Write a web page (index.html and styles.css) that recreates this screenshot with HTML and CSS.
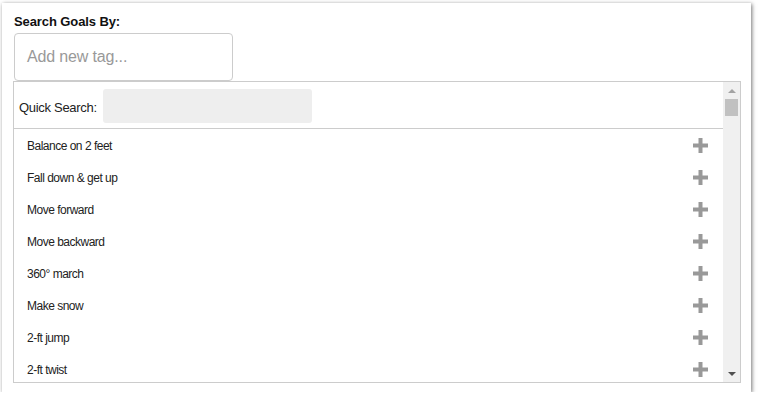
FILE: index.html
```html
<!DOCTYPE html>
<html>
<head>
<meta charset="utf-8">
<link rel="stylesheet" href="styles.css">
</head>
<body>
<div class="dialog">
  <div class="heading">Search Goals By:</div>
  <div class="tag-input">Add new tag...</div>
  <div class="list-box">
    <div class="list-main">
      <div class="quick">
        <span class="quick-label">Quick Search:</span>
        <div class="quick-input"></div>
      </div>
      <div class="rows">
        <div class="row"><span>Balance on 2 feet</span><svg class="plus" viewBox="0 0 15 15"><path d="M7.5 0v15M0 7.5h15"/></svg></div>
        <div class="row"><span>Fall down &amp; get up</span><svg class="plus" viewBox="0 0 15 15"><path d="M7.5 0v15M0 7.5h15"/></svg></div>
        <div class="row"><span>Move forward</span><svg class="plus" viewBox="0 0 15 15"><path d="M7.5 0v15M0 7.5h15"/></svg></div>
        <div class="row"><span>Move backward</span><svg class="plus" viewBox="0 0 15 15"><path d="M7.5 0v15M0 7.5h15"/></svg></div>
        <div class="row"><span>360° march</span><svg class="plus" viewBox="0 0 15 15"><path d="M7.5 0v15M0 7.5h15"/></svg></div>
        <div class="row"><span>Make snow</span><svg class="plus" viewBox="0 0 15 15"><path d="M7.5 0v15M0 7.5h15"/></svg></div>
        <div class="row"><span>2-ft jump</span><svg class="plus" viewBox="0 0 15 15"><path d="M7.5 0v15M0 7.5h15"/></svg></div>
        <div class="row"><span>2-ft twist</span><svg class="plus" viewBox="0 0 15 15"><path d="M7.5 0v15M0 7.5h15"/></svg></div>
      </div>
    </div>
    <div class="scrollbar">
      <div class="arrow up"></div>
      <div class="thumb"></div>
      <div class="track"></div>
      <div class="arrow down"></div>
    </div>
  </div>
</div>
</body>
</html>
```
FILE: styles.css
```css
html, body {
  margin: 0;
  padding: 0;
  background: #fff;
}
body {
  font-family: "Liberation Sans", Arial, sans-serif;
  color: #222;
}
.dialog {
  margin: 3px 0 0 2px;
  width: 749px;
  height: 389px;
  box-sizing: border-box;
  background: #fff;
  box-shadow: 1px 1px 4px rgba(0, 0, 0, 0.55);
  padding: 11px 11px 0 11px;
  display: flex;
  flex-direction: column;
}
.heading {
  font-size: 13px;
  font-weight: bold;
  line-height: 15px;
  padding-left: 1px;
  color: #111;
  letter-spacing: -0.1px;
}
.tag-input {
  margin: 4px 0 0 1px;
  width: 219px;
  height: 48px;
  box-sizing: border-box;
  border: 1px solid #ccc;
  border-radius: 4px;
  font-size: 16px;
  color: #999;
  padding-left: 12px;
  line-height: 46px;
  letter-spacing: -0.15px;
}
.list-box {
  width: 728px;
  height: 302px;
  box-sizing: border-box;
  border: 1px solid #ccc;
  display: flex;
  overflow: hidden;
}
.list-main {
  flex: 1;
  overflow: hidden;
}
.quick {
  height: 47px;
  box-sizing: border-box;
  border-bottom: 1px solid #ccc;
  display: flex;
  align-items: center;
  padding-left: 5px;
  gap: 6px;
}
.quick-label {
  font-size: 13px;
  color: #222;
  padding-top: 4px;
  letter-spacing: -0.3px;
}
.quick-input {
  width: 209px;
  height: 34px;
  margin-top: 1px;
  background: #eee;
  border-radius: 3px;
}
.row {
  height: 32px;
  display: flex;
  align-items: center;
  justify-content: space-between;
  padding: 0 15px 0 13px;
  font-size: 12px;
  color: #222;
  letter-spacing: -0.5px;
}
.row span {
  padding-top: 1px;
}
.plus {
  width: 15px;
  height: 15px;
  display: block;
}
.plus path {
  stroke: #999;
  stroke-width: 4;
  fill: none;
}
.scrollbar {
  width: 17px;
  background: #f0f0f0;
  display: flex;
  flex-direction: column;
  align-items: center;
}
.arrow {
  height: 17px;
  width: 17px;
  display: flex;
  align-items: center;
  justify-content: center;
}
.arrow.up::before {
  content: "";
  border-left: 4px solid transparent;
  border-right: 4px solid transparent;
  border-bottom: 4px solid #a3a3a3;
}
.arrow.down::before {
  content: "";
  border-left: 4px solid transparent;
  border-right: 4px solid transparent;
  border-top: 4px solid #505050;
}
.thumb {
  width: 13px;
  height: 17px;
  background: #c1c1c1;
}
.track {
  flex: 1;
}
```
